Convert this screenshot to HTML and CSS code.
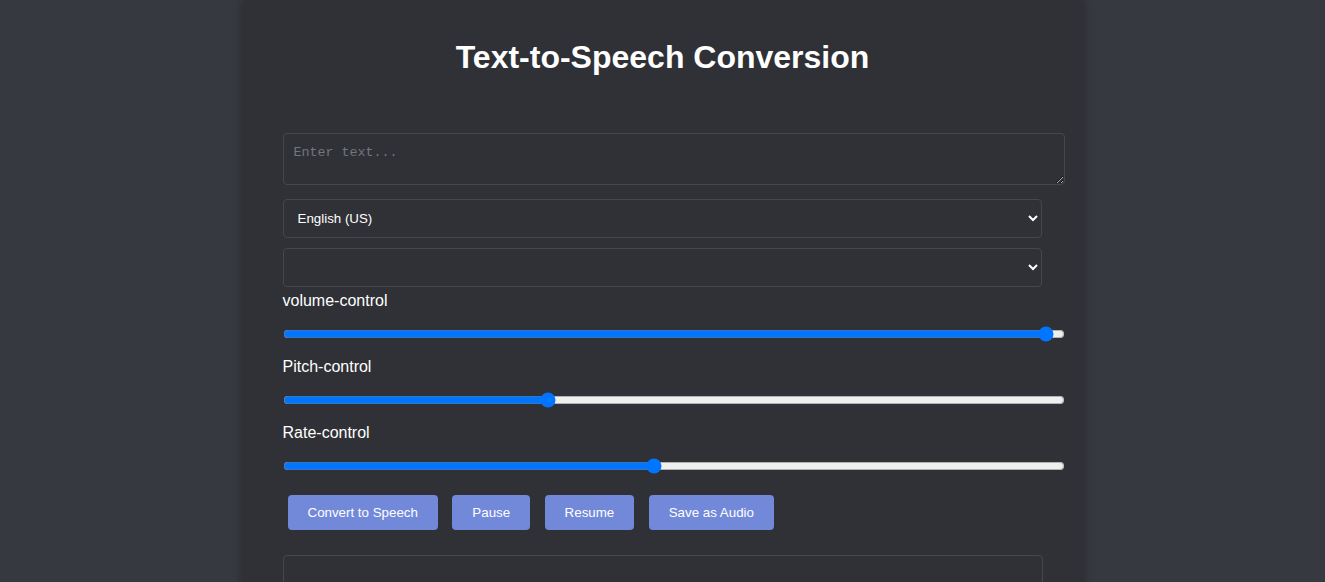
FILE: index.html
```html
<!DOCTYPE html>
<html lang="en">
<head>
<meta charset="utf-8">
<title>Text-to-Speech Conversion</title>
<link rel="stylesheet" href="styles.css">
</head>
<body>
<div class="container">
  <h1 class="title">Text-to-Speech Conversion</h1>
  <textarea class="text-input" placeholder="Enter text..."></textarea>
  <select class="select">
    <option>English (US)</option>
  </select>
  <select class="select select-voice">
    <option></option>
  </select>
  <label class="label">volume-control</label>
  <input class="range" type="range" min="0" max="1000" value="986">
  <label class="label">Pitch-control</label>
  <input class="range" type="range" min="0.5" max="2" step="0.001" value="1.005">
  <label class="label">Rate-control</label>
  <input class="range" type="range" min="0.1" max="2" step="0.001" value="1.002">
  <div class="buttons">
    <button class="btn">Convert to Speech</button>
    <button class="btn">Pause</button>
    <button class="btn">Resume</button>
    <button class="btn">Save as Audio</button>
  </div>
  <div class="output"></div>
</div>
</body>
</html>
```

FILE: styles.css
```css
html, body {
  margin: 0;
  padding: 0;
  background: #36393f;
  font-family: "Liberation Sans", Arial, sans-serif;
  color: #ffffff;
}

.container {
  width: 760px;
  margin: 0 auto;
  padding: 39px 40px 40px;
  background: #2f3136;
  box-shadow: 0 0 10px rgba(0, 0, 0, 0.3);
  min-height: 700px;
}

.title {
  margin: 0 0 57px;
  font-size: 32px;
  font-weight: bold;
  text-align: center;
  line-height: 37px;
}

.text-input {
  display: block;
  width: 760px;
  height: 30px;
  padding: 11px 10px 9px;
  margin: 0 0 14px;
  border: 1px solid #45474d;
  border-radius: 4px;
  background: #2f3136;
  color: #ffffff;
  font-family: "Liberation Mono", "DejaVu Sans Mono", monospace;
  font-size: 13.333px;
  line-height: 15px;
  color-scheme: dark;
}

.text-input::placeholder {
  color: #72767d;
}

.select {
  display: block;
  box-sizing: border-box;
  width: 759px;
  height: 39px;
  padding: 0 10px;
  margin: 0 0 10px;
  border: 1px solid #45474d;
  border-radius: 4px;
  background: #2f3136;
  color: #ffffff;
  font-family: "Liberation Sans", Arial, sans-serif;
  font-size: 13.333px;
  color-scheme: dark;
}

.select-voice {
  margin-bottom: 5px;
}

.label {
  display: block;
  font-size: 16px;
  line-height: 18px;
}

.range {
  display: block;
  width: 782px;
  height: 16px;
  margin: 16px 0;
  padding: 0;
}

.btn {
  display: inline-block;
  margin: 5px;
  height: 35px;
  padding: 0 20px;
  border: none;
  border-radius: 4px;
  background: #7289da;
  color: #ffffff;
  font-family: "Liberation Sans", Arial, sans-serif;
  font-size: 13.333px;
  cursor: pointer;
}

.output {
  margin-top: 20px;
  height: 120px;
  border: 1px solid #45474d;
  border-radius: 4px;
}
```
